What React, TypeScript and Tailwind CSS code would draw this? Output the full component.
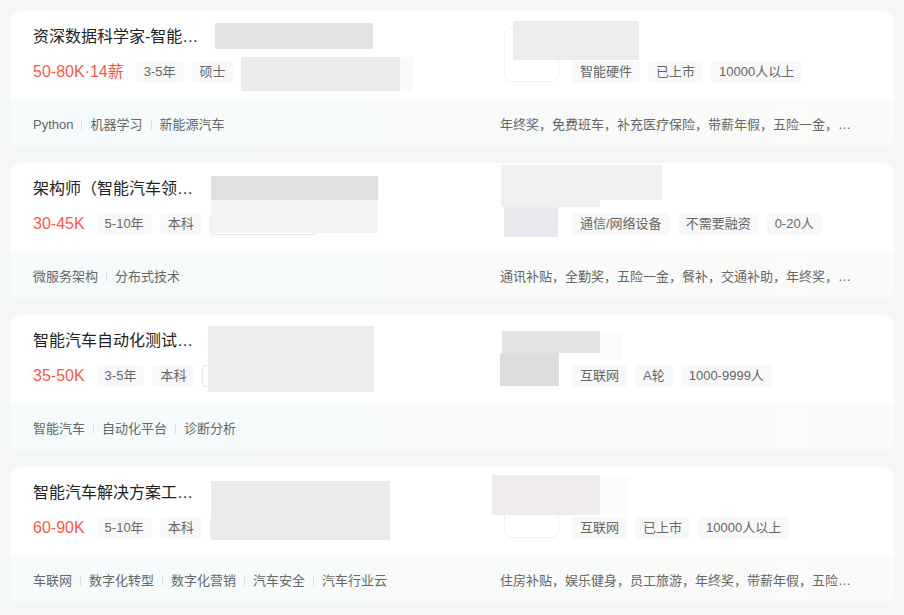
import React from "react";

type Block = { l: number; t: number; w: number; h: number; c: string };
type Job = {
  title: string;
  salary: string;
  tags: string[];
  locW: number;
  ctags: string[];
  skills: string[];
  benefits: string;
  blocks: Block[];
};

const jobs: Job[] = [
  {
    title: "资深数据科学家-智能…",
    salary: "50-80K·14薪",
    tags: ["3-5年", "硕士"],
    locW: 150,
    ctags: ["智能硬件", "已上市", "10000人以上"],
    skills: ["Python", "机器学习", "新能源汽车"],
    benefits: "年终奖，免费班车，补充医疗保险，带薪年假，五险一金，…",
    blocks: [
      { l: 205, t: 12, w: 158, h: 26, c: "#e4e4e4" },
      { l: 231, t: 46, w: 159, h: 34, c: "#e9ebec" },
      { l: 390, t: 46, w: 13, h: 34, c: "#f8f9f9" },
      { l: 503, t: 10, w: 126, h: 39, c: "#ececec" },
    ],
  },
  {
    title: "架构师（智能汽车领…",
    salary: "30-45K",
    tags: ["5-10年", "本科"],
    locW: 108,
    ctags: ["通信/网络设备", "不需要融资", "0-20人"],
    skills: ["微服务架构", "分布式技术"],
    benefits: "通讯补贴，全勤奖，五险一金，餐补，交通补助，年终奖，…",
    blocks: [
      { l: 201, t: 13, w: 167, h: 24, c: "#e0e0e0" },
      { l: 201, t: 37, w: 167, h: 33, c: "#f3f5f5" },
      { l: 491, t: 2, w: 161, h: 35, c: "#f1f1f1" },
      { l: 491, t: 37, w: 99, h: 7, c: "#efefef" },
      { l: 494, t: 44, w: 54, h: 30, c: "#e8e9ed" },
    ],
  },
  {
    title: "智能汽车自动化测试…",
    salary: "35-50K",
    tags: ["3-5年", "本科"],
    locW: 150,
    ctags: ["互联网", "A轮", "1000-9999人"],
    skills: ["智能汽车", "自动化平台", "诊断分析"],
    benefits: "",
    blocks: [
      { l: 198, t: 11, w: 166, h: 66, c: "#ebeceb" },
      { l: 492, t: 16, w: 98, h: 22, c: "#e3e3e3" },
      { l: 590, t: 16, w: 22, h: 28, c: "#fbfbfb" },
      { l: 490, t: 38, w: 59, h: 33, c: "#dddddd" },
    ],
  },
  {
    title: "智能汽车解决方案工…",
    salary: "60-90K",
    tags: ["5-10年", "本科"],
    locW: 150,
    ctags: ["互联网", "已上市", "10000人以上"],
    skills: ["车联网", "数字化转型", "数字化营销", "汽车安全", "汽车行业云"],
    benefits: "住房补贴，娱乐健身，员工旅游，年终奖，带薪年假，五险…",
    blocks: [
      { l: 201, t: 14, w: 179, h: 59, c: "#e9eae9" },
      { l: 482, t: 8, w: 108, h: 40, c: "#f0eced" },
      { l: 590, t: 8, w: 30, h: 40, c: "#fcfcfc" },
    ],
  },
];

function Tag({ children }: { children: React.ReactNode }) {
  return (
    <span className="h-[22px] px-2 rounded-[4px] bg-[#f8f8f8] text-[13px] leading-[22px] text-[#666] whitespace-nowrap">
      {children}
    </span>
  );
}

function Card({ job }: { job: Job }) {
  return (
    <div className="relative h-[136px] rounded-xl bg-white overflow-hidden flex flex-col">
      <div className="h-[88px] flex">
        <div className="w-[494px] pl-[23px] pt-[15px]">
          <div className="h-[22px] flex items-center">
            <span className="text-[16px] leading-[22px] text-[#222] whitespace-nowrap">{job.title}</span>
          </div>
          <div className="mt-[13px] h-[22px] flex items-center gap-2">
            <span className="text-[16px] leading-[22px] text-[#fe574a] mr-1 whitespace-nowrap">{job.salary}</span>
            {job.tags.map((t) => (
              <Tag key={t}>{t}</Tag>
            ))}
            <span
              className="h-[22px] rounded-[4px] border border-[#e8e8e8] bg-white"
              style={{ width: job.locW }}
            />
          </div>
        </div>
        <div className="flex pt-[16px]">
          <div className="w-[55px] h-[55px] rounded-lg border border-[#f2f2f2] bg-white" />
          <div className="ml-[13px] flex flex-col">
            <div className="h-[22px]" />
            <div className="mt-[12px] flex gap-2">
              {job.ctags.map((t) => (
                <Tag key={t}>{t}</Tag>
              ))}
            </div>
          </div>
        </div>
      </div>
      <div className="h-[48px] flex items-center pt-[3px] px-[23px] bg-gradient-to-r from-[#f4fbfb] to-[#fbfaf8]">
        <div className="w-[467px] flex items-center text-[13px] text-[#666]">
          {job.skills.map((s, i) => (
            <React.Fragment key={s}>
              {i > 0 && <span className="mx-[8px] w-px h-[10px] bg-[#e0e0e0]" />}
              <span className="whitespace-nowrap">{s}</span>
            </React.Fragment>
          ))}
        </div>
        <div className="text-[13px] text-[#666] whitespace-nowrap">{job.benefits}</div>
      </div>
      {job.blocks.map((b, i) => (
        <div
          key={i}
          className="absolute"
          style={{ left: b.l, top: b.t, width: b.w, height: b.h, background: b.c }}
        />
      ))}
    </div>
  );
}

export default function App() {
  return (
    <div className="min-h-[615px] bg-[#f5f6f8] px-[10px] pt-[11px] flex flex-col gap-[16px] font-['Liberation_Sans','Noto_Sans_CJK_SC',sans-serif]">
      {jobs.map((j) => (
        <Card key={j.title} job={j} />
      ))}
    </div>
  );
}
